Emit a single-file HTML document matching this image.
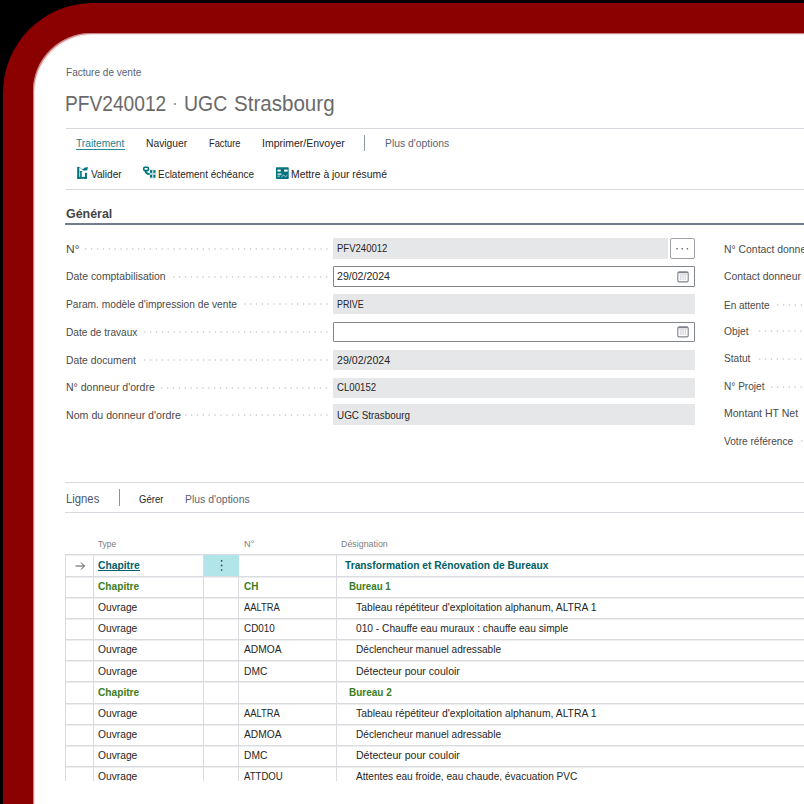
<!DOCTYPE html>
<html><head><meta charset="utf-8"><style>
html,body{margin:0;padding:0;}
body{width:804px;height:804px;overflow:hidden;background:#000;position:relative;font-family:"Liberation Sans",sans-serif;}
.t{position:absolute;white-space:nowrap;transform-origin:0 0;}
.r{position:absolute;}
#red{position:absolute;left:3px;top:3px;width:1000px;height:1000px;background:#8b0000;border-radius:90px;}
#white{position:absolute;left:33px;top:33px;width:1000px;height:1000px;background:#fff;border-radius:58px;overflow:hidden;box-shadow:inset 1px 1px 0 rgba(139,0,0,.42),inset 2px 2px 0 rgba(139,0,0,.1);}
#c{position:absolute;left:-33px;top:-33px;width:804px;height:804px;}
</style></head><body>
<div id="red"></div>
<div id="white"><div id="c">
<div class="t" style="left:65.60px;top:67.14px;font-size:10.7px;line-height:10.7px;color:#5a6473;font-weight:400;transform:scaleX(0.9390);">Facture de vente</div>
<div class="t" style="left:65.20px;top:93.22px;font-size:21.6px;line-height:21.6px;color:#6a6a6a;font-weight:400;transform:scaleX(0.8879);">PFV240012</div>
<div class="r" style="left:174.40px;top:102.50px;width:2.10px;height:2.10px;background:#7a7a7a;border-radius:50%"></div>
<div class="t" style="left:184.30px;top:93.22px;font-size:21.6px;line-height:21.6px;color:#6a6a6a;font-weight:400;transform:scaleX(0.9000);">UGC</div>
<div class="t" style="left:233.60px;top:93.22px;font-size:21.6px;line-height:21.6px;color:#6a6a6a;font-weight:400;transform:scaleX(0.9521);">Strasbourg</div>
<div class="r" style="left:66.00px;top:128.20px;width:800.00px;height:1.00px;background:#d5d9de"></div>
<div class="t" style="left:76.30px;top:137.59px;font-size:11px;line-height:11px;color:#1f7f8a;font-weight:400;transform:scaleX(0.9259);">Traitement</div>
<div class="r" style="left:76.30px;top:149.10px;width:48.30px;height:1.30px;background:#2a8893"></div>
<div class="t" style="left:145.80px;top:137.79px;font-size:11px;line-height:11px;color:#262626;font-weight:400;transform:scaleX(0.9336);">Naviguer</div>
<div class="t" style="left:208.50px;top:137.79px;font-size:11px;line-height:11px;color:#262626;font-weight:400;transform:scaleX(0.8447);">Facture</div>
<div class="t" style="left:261.80px;top:137.79px;font-size:11px;line-height:11px;color:#262626;font-weight:400;transform:scaleX(0.9528);">Imprimer/Envoyer</div>
<div class="r" style="left:364.00px;top:134.60px;width:1.20px;height:16.20px;background:#8f96a0"></div>
<div class="t" style="left:384.80px;top:137.79px;font-size:11px;line-height:11px;color:#5b6472;font-weight:400;transform:scaleX(0.9421);">Plus d'options</div>
<div class="t" style="left:91.00px;top:168.69px;font-size:11px;line-height:11px;color:#262626;font-weight:400;transform:scaleX(0.9185);">Valider</div>
<div class="t" style="left:158.00px;top:168.69px;font-size:11px;line-height:11px;color:#262626;font-weight:400;transform:scaleX(0.9075);">Eclatement échéance</div>
<div class="t" style="left:291.00px;top:168.69px;font-size:11px;line-height:11px;color:#262626;font-weight:400;transform:scaleX(0.9460);">Mettre à jour résumé</div>
<div class="r" style="left:66.00px;top:189.00px;width:800.00px;height:1.00px;background:#d5d9de"></div>
<svg class="r" style="left:77px;top:166px" width="12" height="14" viewBox="0 0 12 14">
<rect x="0.2" y="0.9" width="2.1" height="11.9" fill="#00727d"/>
<rect x="0.2" y="10.9" width="9.7" height="1.9" fill="#00727d"/>
<rect x="7.9" y="6.8" width="2" height="6" fill="#00727d"/>
<rect x="3" y="5.2" width="1.9" height="6.5" fill="#00727d" opacity="0.85"/>
<rect x="2.6" y="5" width="2.7" height="1" fill="#00727d" opacity="0.7"/>
<path d="M2 1.2 L6 3.8" stroke="#00727d" stroke-width="1" opacity="0.45"/>
<path d="M5 3.9 Q7 1.4 10.9 1.1 L10.3 4.2 Q7.6 4.9 5 3.9Z" fill="#00727d"/>
</svg>
<svg class="r" style="left:143px;top:166px" width="14" height="13" viewBox="0 0 14 13">
<rect x="0.8" y="1.3" width="4.6" height="3.3" rx="1" fill="none" stroke="#00727d" stroke-width="1.6"/>
<path d="M2.5 4.8 Q2.8 7.6 6.6 8.2" fill="none" stroke="#00727d" stroke-width="1.8"/>
<rect x="6.6" y="3.6" width="6.3" height="8.8" fill="#00727d" opacity="0.28"/>
<rect x="7" y="4.2" width="2" height="2.6" fill="#00727d"/>
<rect x="10.4" y="4.2" width="2" height="2.6" fill="#00727d"/>
<rect x="7" y="8.9" width="2" height="2.6" fill="#00727d"/>
<rect x="10.4" y="8.9" width="2" height="2.6" fill="#00727d"/>
</svg>
<svg class="r" style="left:275.6px;top:166.5px" width="13" height="13" viewBox="0 0 13 13">
<rect x="0" y="0.2" width="12.7" height="11.9" rx="0.8" fill="#00727d"/>
<rect x="1.5" y="2.6" width="3.2" height="2" fill="#fff"/>
<rect x="8" y="2.6" width="3.6" height="2" fill="#fff"/>
<rect x="1.5" y="6.3" width="4" height="1.9" fill="#fff" opacity="0.7"/>
<rect x="1.2" y="8.6" width="2.8" height="1.6" fill="#fff" opacity="0.45"/>
<path d="M5.5 10.5 L7.5 7.8 L9.5 9.8 L11.5 8" stroke="#fff" stroke-width="1" fill="none" opacity="0.6"/>
</svg>
<div class="t" style="left:65.60px;top:207.80px;font-size:12.4px;line-height:12.4px;color:#454545;font-weight:700;transform:scaleX(1.0026);">Général</div>
<div class="r" style="left:65.00px;top:223.30px;width:800.00px;height:1.40px;background:#737c8b"></div>
<div class="t" style="left:66.00px;top:243.56px;font-size:10.8px;line-height:10.8px;color:#4a4a4a;font-weight:400;transform:scaleX(1.1140);">N°</div>
<svg class="r" style="left:84.92px;top:247.80px" width="245.1" height="2"><circle cx="0.75" cy="1" r="0.75" fill="#bfc1c7"/><circle cx="6.63" cy="1" r="0.75" fill="#bfc1c7"/><circle cx="12.51" cy="1" r="0.75" fill="#bfc1c7"/><circle cx="18.39" cy="1" r="0.75" fill="#bfc1c7"/><circle cx="24.27" cy="1" r="0.75" fill="#bfc1c7"/><circle cx="30.15" cy="1" r="0.75" fill="#bfc1c7"/><circle cx="36.03" cy="1" r="0.75" fill="#bfc1c7"/><circle cx="41.91" cy="1" r="0.75" fill="#bfc1c7"/><circle cx="47.79" cy="1" r="0.75" fill="#bfc1c7"/><circle cx="53.67" cy="1" r="0.75" fill="#bfc1c7"/><circle cx="59.55" cy="1" r="0.75" fill="#bfc1c7"/><circle cx="65.43" cy="1" r="0.75" fill="#bfc1c7"/><circle cx="71.31" cy="1" r="0.75" fill="#bfc1c7"/><circle cx="77.19" cy="1" r="0.75" fill="#bfc1c7"/><circle cx="83.07" cy="1" r="0.75" fill="#bfc1c7"/><circle cx="88.95" cy="1" r="0.75" fill="#bfc1c7"/><circle cx="94.83" cy="1" r="0.75" fill="#bfc1c7"/><circle cx="100.71" cy="1" r="0.75" fill="#bfc1c7"/><circle cx="106.59" cy="1" r="0.75" fill="#bfc1c7"/><circle cx="112.47" cy="1" r="0.75" fill="#bfc1c7"/><circle cx="118.35" cy="1" r="0.75" fill="#bfc1c7"/><circle cx="124.23" cy="1" r="0.75" fill="#bfc1c7"/><circle cx="130.11" cy="1" r="0.75" fill="#bfc1c7"/><circle cx="135.99" cy="1" r="0.75" fill="#bfc1c7"/><circle cx="141.87" cy="1" r="0.75" fill="#bfc1c7"/><circle cx="147.75" cy="1" r="0.75" fill="#bfc1c7"/><circle cx="153.63" cy="1" r="0.75" fill="#bfc1c7"/><circle cx="159.51" cy="1" r="0.75" fill="#bfc1c7"/><circle cx="165.39" cy="1" r="0.75" fill="#bfc1c7"/><circle cx="171.27" cy="1" r="0.75" fill="#bfc1c7"/><circle cx="177.15" cy="1" r="0.75" fill="#bfc1c7"/><circle cx="183.03" cy="1" r="0.75" fill="#bfc1c7"/><circle cx="188.91" cy="1" r="0.75" fill="#bfc1c7"/><circle cx="194.79" cy="1" r="0.75" fill="#bfc1c7"/><circle cx="200.67" cy="1" r="0.75" fill="#bfc1c7"/><circle cx="206.55" cy="1" r="0.75" fill="#bfc1c7"/><circle cx="212.43" cy="1" r="0.75" fill="#bfc1c7"/><circle cx="218.31" cy="1" r="0.75" fill="#bfc1c7"/><circle cx="224.19" cy="1" r="0.75" fill="#bfc1c7"/><circle cx="230.07" cy="1" r="0.75" fill="#bfc1c7"/><circle cx="235.95" cy="1" r="0.75" fill="#bfc1c7"/><circle cx="241.83" cy="1" r="0.75" fill="#bfc1c7"/></svg>
<div class="r" style="left:333.00px;top:238.10px;width:335.00px;height:20.80px;background:#e6e7e9"></div>
<div class="t" style="left:336.60px;top:243.39px;font-size:11px;line-height:11px;color:#262626;font-weight:400;transform:scaleX(0.8675);">PFV240012</div>
<div class="t" style="left:66.00px;top:271.26px;font-size:10.8px;line-height:10.8px;color:#4a4a4a;font-weight:400;transform:scaleX(0.9646);">Date comptabilisation</div>
<svg class="r" style="left:173.12px;top:275.50px" width="156.9" height="2"><circle cx="0.75" cy="1" r="0.75" fill="#bfc1c7"/><circle cx="6.63" cy="1" r="0.75" fill="#bfc1c7"/><circle cx="12.51" cy="1" r="0.75" fill="#bfc1c7"/><circle cx="18.39" cy="1" r="0.75" fill="#bfc1c7"/><circle cx="24.27" cy="1" r="0.75" fill="#bfc1c7"/><circle cx="30.15" cy="1" r="0.75" fill="#bfc1c7"/><circle cx="36.03" cy="1" r="0.75" fill="#bfc1c7"/><circle cx="41.91" cy="1" r="0.75" fill="#bfc1c7"/><circle cx="47.79" cy="1" r="0.75" fill="#bfc1c7"/><circle cx="53.67" cy="1" r="0.75" fill="#bfc1c7"/><circle cx="59.55" cy="1" r="0.75" fill="#bfc1c7"/><circle cx="65.43" cy="1" r="0.75" fill="#bfc1c7"/><circle cx="71.31" cy="1" r="0.75" fill="#bfc1c7"/><circle cx="77.19" cy="1" r="0.75" fill="#bfc1c7"/><circle cx="83.07" cy="1" r="0.75" fill="#bfc1c7"/><circle cx="88.95" cy="1" r="0.75" fill="#bfc1c7"/><circle cx="94.83" cy="1" r="0.75" fill="#bfc1c7"/><circle cx="100.71" cy="1" r="0.75" fill="#bfc1c7"/><circle cx="106.59" cy="1" r="0.75" fill="#bfc1c7"/><circle cx="112.47" cy="1" r="0.75" fill="#bfc1c7"/><circle cx="118.35" cy="1" r="0.75" fill="#bfc1c7"/><circle cx="124.23" cy="1" r="0.75" fill="#bfc1c7"/><circle cx="130.11" cy="1" r="0.75" fill="#bfc1c7"/><circle cx="135.99" cy="1" r="0.75" fill="#bfc1c7"/><circle cx="141.87" cy="1" r="0.75" fill="#bfc1c7"/><circle cx="147.75" cy="1" r="0.75" fill="#bfc1c7"/><circle cx="153.63" cy="1" r="0.75" fill="#bfc1c7"/></svg>
<div class="r" style="left:333.00px;top:266.00px;width:361.70px;height:20.60px;border:1px solid #80858c;box-sizing:border-box;border-radius:1px;background:#fff"></div>
<svg class="r" style="left:676.6px;top:270.60px" width="12" height="12" viewBox="0 0 12 12">
<rect x="0.8" y="0.9" width="10.4" height="10" rx="1.3" fill="none" stroke="#80858d" stroke-width="1.1"/>
<path d="M1 1.6 H11" stroke="#80858d" stroke-width="1.2"/>
<path d="M3.3 3.5 V9 M5 3.5 V9 M6.8 3.5 V9 M8.6 3.5 V9" stroke="#c9ccd2" stroke-width="0.8"/>
<path d="M1.5 3.3 H10.5" stroke="#d5d7db" stroke-width="0.8"/>
</svg>
<div class="t" style="left:336.60px;top:271.09px;font-size:11px;line-height:11px;color:#262626;font-weight:400;transform:scaleX(0.9627);">29/02/2024</div>
<div class="t" style="left:66.00px;top:298.86px;font-size:10.8px;line-height:10.8px;color:#4a4a4a;font-weight:400;transform:scaleX(0.9450);">Param. modèle d'impression de vente</div>
<svg class="r" style="left:243.68px;top:303.10px" width="86.3" height="2"><circle cx="0.75" cy="1" r="0.75" fill="#bfc1c7"/><circle cx="6.63" cy="1" r="0.75" fill="#bfc1c7"/><circle cx="12.51" cy="1" r="0.75" fill="#bfc1c7"/><circle cx="18.39" cy="1" r="0.75" fill="#bfc1c7"/><circle cx="24.27" cy="1" r="0.75" fill="#bfc1c7"/><circle cx="30.15" cy="1" r="0.75" fill="#bfc1c7"/><circle cx="36.03" cy="1" r="0.75" fill="#bfc1c7"/><circle cx="41.91" cy="1" r="0.75" fill="#bfc1c7"/><circle cx="47.79" cy="1" r="0.75" fill="#bfc1c7"/><circle cx="53.67" cy="1" r="0.75" fill="#bfc1c7"/><circle cx="59.55" cy="1" r="0.75" fill="#bfc1c7"/><circle cx="65.43" cy="1" r="0.75" fill="#bfc1c7"/><circle cx="71.31" cy="1" r="0.75" fill="#bfc1c7"/><circle cx="77.19" cy="1" r="0.75" fill="#bfc1c7"/><circle cx="83.07" cy="1" r="0.75" fill="#bfc1c7"/></svg>
<div class="r" style="left:333.00px;top:293.80px;width:361.70px;height:20.60px;background:#e6e7e9"></div>
<div class="t" style="left:336.60px;top:298.69px;font-size:11px;line-height:11px;color:#262626;font-weight:400;transform:scaleX(0.8088);">PRIVE</div>
<div class="t" style="left:66.00px;top:326.96px;font-size:10.8px;line-height:10.8px;color:#4a4a4a;font-weight:400;transform:scaleX(0.9365);">Date de travaux</div>
<svg class="r" style="left:143.72px;top:331.20px" width="186.3" height="2"><circle cx="0.75" cy="1" r="0.75" fill="#bfc1c7"/><circle cx="6.63" cy="1" r="0.75" fill="#bfc1c7"/><circle cx="12.51" cy="1" r="0.75" fill="#bfc1c7"/><circle cx="18.39" cy="1" r="0.75" fill="#bfc1c7"/><circle cx="24.27" cy="1" r="0.75" fill="#bfc1c7"/><circle cx="30.15" cy="1" r="0.75" fill="#bfc1c7"/><circle cx="36.03" cy="1" r="0.75" fill="#bfc1c7"/><circle cx="41.91" cy="1" r="0.75" fill="#bfc1c7"/><circle cx="47.79" cy="1" r="0.75" fill="#bfc1c7"/><circle cx="53.67" cy="1" r="0.75" fill="#bfc1c7"/><circle cx="59.55" cy="1" r="0.75" fill="#bfc1c7"/><circle cx="65.43" cy="1" r="0.75" fill="#bfc1c7"/><circle cx="71.31" cy="1" r="0.75" fill="#bfc1c7"/><circle cx="77.19" cy="1" r="0.75" fill="#bfc1c7"/><circle cx="83.07" cy="1" r="0.75" fill="#bfc1c7"/><circle cx="88.95" cy="1" r="0.75" fill="#bfc1c7"/><circle cx="94.83" cy="1" r="0.75" fill="#bfc1c7"/><circle cx="100.71" cy="1" r="0.75" fill="#bfc1c7"/><circle cx="106.59" cy="1" r="0.75" fill="#bfc1c7"/><circle cx="112.47" cy="1" r="0.75" fill="#bfc1c7"/><circle cx="118.35" cy="1" r="0.75" fill="#bfc1c7"/><circle cx="124.23" cy="1" r="0.75" fill="#bfc1c7"/><circle cx="130.11" cy="1" r="0.75" fill="#bfc1c7"/><circle cx="135.99" cy="1" r="0.75" fill="#bfc1c7"/><circle cx="141.87" cy="1" r="0.75" fill="#bfc1c7"/><circle cx="147.75" cy="1" r="0.75" fill="#bfc1c7"/><circle cx="153.63" cy="1" r="0.75" fill="#bfc1c7"/><circle cx="159.51" cy="1" r="0.75" fill="#bfc1c7"/><circle cx="165.39" cy="1" r="0.75" fill="#bfc1c7"/><circle cx="171.27" cy="1" r="0.75" fill="#bfc1c7"/><circle cx="177.15" cy="1" r="0.75" fill="#bfc1c7"/><circle cx="183.03" cy="1" r="0.75" fill="#bfc1c7"/></svg>
<div class="r" style="left:333.00px;top:321.70px;width:361.70px;height:20.60px;border:1px solid #80858c;box-sizing:border-box;border-radius:1px;background:#fff"></div>
<svg class="r" style="left:676.6px;top:326.30px" width="12" height="12" viewBox="0 0 12 12">
<rect x="0.8" y="0.9" width="10.4" height="10" rx="1.3" fill="none" stroke="#80858d" stroke-width="1.1"/>
<path d="M1 1.6 H11" stroke="#80858d" stroke-width="1.2"/>
<path d="M3.3 3.5 V9 M5 3.5 V9 M6.8 3.5 V9 M8.6 3.5 V9" stroke="#c9ccd2" stroke-width="0.8"/>
<path d="M1.5 3.3 H10.5" stroke="#d5d7db" stroke-width="0.8"/>
</svg>
<div class="t" style="left:66.00px;top:354.86px;font-size:10.8px;line-height:10.8px;color:#4a4a4a;font-weight:400;transform:scaleX(0.9557);">Date document</div>
<svg class="r" style="left:143.72px;top:359.10px" width="186.3" height="2"><circle cx="0.75" cy="1" r="0.75" fill="#bfc1c7"/><circle cx="6.63" cy="1" r="0.75" fill="#bfc1c7"/><circle cx="12.51" cy="1" r="0.75" fill="#bfc1c7"/><circle cx="18.39" cy="1" r="0.75" fill="#bfc1c7"/><circle cx="24.27" cy="1" r="0.75" fill="#bfc1c7"/><circle cx="30.15" cy="1" r="0.75" fill="#bfc1c7"/><circle cx="36.03" cy="1" r="0.75" fill="#bfc1c7"/><circle cx="41.91" cy="1" r="0.75" fill="#bfc1c7"/><circle cx="47.79" cy="1" r="0.75" fill="#bfc1c7"/><circle cx="53.67" cy="1" r="0.75" fill="#bfc1c7"/><circle cx="59.55" cy="1" r="0.75" fill="#bfc1c7"/><circle cx="65.43" cy="1" r="0.75" fill="#bfc1c7"/><circle cx="71.31" cy="1" r="0.75" fill="#bfc1c7"/><circle cx="77.19" cy="1" r="0.75" fill="#bfc1c7"/><circle cx="83.07" cy="1" r="0.75" fill="#bfc1c7"/><circle cx="88.95" cy="1" r="0.75" fill="#bfc1c7"/><circle cx="94.83" cy="1" r="0.75" fill="#bfc1c7"/><circle cx="100.71" cy="1" r="0.75" fill="#bfc1c7"/><circle cx="106.59" cy="1" r="0.75" fill="#bfc1c7"/><circle cx="112.47" cy="1" r="0.75" fill="#bfc1c7"/><circle cx="118.35" cy="1" r="0.75" fill="#bfc1c7"/><circle cx="124.23" cy="1" r="0.75" fill="#bfc1c7"/><circle cx="130.11" cy="1" r="0.75" fill="#bfc1c7"/><circle cx="135.99" cy="1" r="0.75" fill="#bfc1c7"/><circle cx="141.87" cy="1" r="0.75" fill="#bfc1c7"/><circle cx="147.75" cy="1" r="0.75" fill="#bfc1c7"/><circle cx="153.63" cy="1" r="0.75" fill="#bfc1c7"/><circle cx="159.51" cy="1" r="0.75" fill="#bfc1c7"/><circle cx="165.39" cy="1" r="0.75" fill="#bfc1c7"/><circle cx="171.27" cy="1" r="0.75" fill="#bfc1c7"/><circle cx="177.15" cy="1" r="0.75" fill="#bfc1c7"/><circle cx="183.03" cy="1" r="0.75" fill="#bfc1c7"/></svg>
<div class="r" style="left:333.00px;top:349.80px;width:361.70px;height:20.60px;background:#e6e7e9"></div>
<div class="t" style="left:336.60px;top:354.69px;font-size:11px;line-height:11px;color:#262626;font-weight:400;transform:scaleX(0.9645);">29/02/2024</div>
<div class="t" style="left:66.00px;top:382.36px;font-size:10.8px;line-height:10.8px;color:#4a4a4a;font-weight:400;transform:scaleX(0.9754);">N° donneur d'ordre</div>
<svg class="r" style="left:161.36px;top:386.60px" width="168.6" height="2"><circle cx="0.75" cy="1" r="0.75" fill="#bfc1c7"/><circle cx="6.63" cy="1" r="0.75" fill="#bfc1c7"/><circle cx="12.51" cy="1" r="0.75" fill="#bfc1c7"/><circle cx="18.39" cy="1" r="0.75" fill="#bfc1c7"/><circle cx="24.27" cy="1" r="0.75" fill="#bfc1c7"/><circle cx="30.15" cy="1" r="0.75" fill="#bfc1c7"/><circle cx="36.03" cy="1" r="0.75" fill="#bfc1c7"/><circle cx="41.91" cy="1" r="0.75" fill="#bfc1c7"/><circle cx="47.79" cy="1" r="0.75" fill="#bfc1c7"/><circle cx="53.67" cy="1" r="0.75" fill="#bfc1c7"/><circle cx="59.55" cy="1" r="0.75" fill="#bfc1c7"/><circle cx="65.43" cy="1" r="0.75" fill="#bfc1c7"/><circle cx="71.31" cy="1" r="0.75" fill="#bfc1c7"/><circle cx="77.19" cy="1" r="0.75" fill="#bfc1c7"/><circle cx="83.07" cy="1" r="0.75" fill="#bfc1c7"/><circle cx="88.95" cy="1" r="0.75" fill="#bfc1c7"/><circle cx="94.83" cy="1" r="0.75" fill="#bfc1c7"/><circle cx="100.71" cy="1" r="0.75" fill="#bfc1c7"/><circle cx="106.59" cy="1" r="0.75" fill="#bfc1c7"/><circle cx="112.47" cy="1" r="0.75" fill="#bfc1c7"/><circle cx="118.35" cy="1" r="0.75" fill="#bfc1c7"/><circle cx="124.23" cy="1" r="0.75" fill="#bfc1c7"/><circle cx="130.11" cy="1" r="0.75" fill="#bfc1c7"/><circle cx="135.99" cy="1" r="0.75" fill="#bfc1c7"/><circle cx="141.87" cy="1" r="0.75" fill="#bfc1c7"/><circle cx="147.75" cy="1" r="0.75" fill="#bfc1c7"/><circle cx="153.63" cy="1" r="0.75" fill="#bfc1c7"/><circle cx="159.51" cy="1" r="0.75" fill="#bfc1c7"/><circle cx="165.39" cy="1" r="0.75" fill="#bfc1c7"/></svg>
<div class="r" style="left:333.00px;top:377.60px;width:361.70px;height:20.00px;background:#e6e7e9"></div>
<div class="t" style="left:336.60px;top:382.19px;font-size:11px;line-height:11px;color:#262626;font-weight:400;transform:scaleX(0.8757);">CL00152</div>
<div class="t" style="left:66.00px;top:410.06px;font-size:10.8px;line-height:10.8px;color:#4a4a4a;font-weight:400;transform:scaleX(0.9843);">Nom du donneur d'ordre</div>
<svg class="r" style="left:184.88px;top:414.30px" width="145.1" height="2"><circle cx="0.75" cy="1" r="0.75" fill="#bfc1c7"/><circle cx="6.63" cy="1" r="0.75" fill="#bfc1c7"/><circle cx="12.51" cy="1" r="0.75" fill="#bfc1c7"/><circle cx="18.39" cy="1" r="0.75" fill="#bfc1c7"/><circle cx="24.27" cy="1" r="0.75" fill="#bfc1c7"/><circle cx="30.15" cy="1" r="0.75" fill="#bfc1c7"/><circle cx="36.03" cy="1" r="0.75" fill="#bfc1c7"/><circle cx="41.91" cy="1" r="0.75" fill="#bfc1c7"/><circle cx="47.79" cy="1" r="0.75" fill="#bfc1c7"/><circle cx="53.67" cy="1" r="0.75" fill="#bfc1c7"/><circle cx="59.55" cy="1" r="0.75" fill="#bfc1c7"/><circle cx="65.43" cy="1" r="0.75" fill="#bfc1c7"/><circle cx="71.31" cy="1" r="0.75" fill="#bfc1c7"/><circle cx="77.19" cy="1" r="0.75" fill="#bfc1c7"/><circle cx="83.07" cy="1" r="0.75" fill="#bfc1c7"/><circle cx="88.95" cy="1" r="0.75" fill="#bfc1c7"/><circle cx="94.83" cy="1" r="0.75" fill="#bfc1c7"/><circle cx="100.71" cy="1" r="0.75" fill="#bfc1c7"/><circle cx="106.59" cy="1" r="0.75" fill="#bfc1c7"/><circle cx="112.47" cy="1" r="0.75" fill="#bfc1c7"/><circle cx="118.35" cy="1" r="0.75" fill="#bfc1c7"/><circle cx="124.23" cy="1" r="0.75" fill="#bfc1c7"/><circle cx="130.11" cy="1" r="0.75" fill="#bfc1c7"/><circle cx="135.99" cy="1" r="0.75" fill="#bfc1c7"/><circle cx="141.87" cy="1" r="0.75" fill="#bfc1c7"/></svg>
<div class="r" style="left:333.00px;top:404.20px;width:361.70px;height:20.60px;background:#e6e7e9"></div>
<div class="t" style="left:336.60px;top:409.89px;font-size:11px;line-height:11px;color:#262626;font-weight:400;transform:scaleX(0.8978);">UGC Strasbourg</div>
<div class="r" style="left:670.20px;top:238.30px;width:24.50px;height:20.60px;border:1px solid #9ca1a8;box-sizing:border-box;border-radius:2px;background:#fff"></div>
<svg class="r" style="left:670px;top:244px" width="25" height="10"><circle cx="7" cy="4.7" r="0.8" fill="#555"/><circle cx="12.2" cy="4.7" r="0.8" fill="#555"/><circle cx="17.4" cy="4.7" r="0.8" fill="#555"/></svg>
<div class="t" style="left:723.70px;top:244.06px;font-size:10.8px;line-height:10.8px;color:#4a4a4a;font-weight:400;transform:scaleX(0.9630);white-space:nowrap">N° Contact donneur d'ordre</div>
<div class="t" style="left:723.70px;top:271.26px;font-size:10.8px;line-height:10.8px;color:#4a4a4a;font-weight:400;transform:scaleX(0.9630);white-space:nowrap">Contact donneur d'ordre</div>
<div class="t" style="left:723.70px;top:299.56px;font-size:10.8px;line-height:10.8px;color:#4a4a4a;font-weight:400;transform:scaleX(0.9241);">En attente</div>
<svg class="r" style="left:777.10px;top:303.90px" width="28.9" height="2"><circle cx="0.75" cy="1" r="0.75" fill="#bfc1c7"/><circle cx="6.63" cy="1" r="0.75" fill="#bfc1c7"/><circle cx="12.51" cy="1" r="0.75" fill="#bfc1c7"/><circle cx="18.39" cy="1" r="0.75" fill="#bfc1c7"/><circle cx="24.27" cy="1" r="0.75" fill="#bfc1c7"/></svg>
<div class="t" style="left:723.70px;top:326.06px;font-size:10.8px;line-height:10.8px;color:#4a4a4a;font-weight:400;transform:scaleX(0.9491);">Objet</div>
<svg class="r" style="left:759.46px;top:330.40px" width="46.5" height="2"><circle cx="0.75" cy="1" r="0.75" fill="#bfc1c7"/><circle cx="6.63" cy="1" r="0.75" fill="#bfc1c7"/><circle cx="12.51" cy="1" r="0.75" fill="#bfc1c7"/><circle cx="18.39" cy="1" r="0.75" fill="#bfc1c7"/><circle cx="24.27" cy="1" r="0.75" fill="#bfc1c7"/><circle cx="30.15" cy="1" r="0.75" fill="#bfc1c7"/><circle cx="36.03" cy="1" r="0.75" fill="#bfc1c7"/><circle cx="41.91" cy="1" r="0.75" fill="#bfc1c7"/></svg>
<div class="t" style="left:723.70px;top:353.26px;font-size:10.8px;line-height:10.8px;color:#4a4a4a;font-weight:400;transform:scaleX(0.9356);">Statut</div>
<svg class="r" style="left:759.46px;top:357.60px" width="46.5" height="2"><circle cx="0.75" cy="1" r="0.75" fill="#bfc1c7"/><circle cx="6.63" cy="1" r="0.75" fill="#bfc1c7"/><circle cx="12.51" cy="1" r="0.75" fill="#bfc1c7"/><circle cx="18.39" cy="1" r="0.75" fill="#bfc1c7"/><circle cx="24.27" cy="1" r="0.75" fill="#bfc1c7"/><circle cx="30.15" cy="1" r="0.75" fill="#bfc1c7"/><circle cx="36.03" cy="1" r="0.75" fill="#bfc1c7"/><circle cx="41.91" cy="1" r="0.75" fill="#bfc1c7"/></svg>
<div class="t" style="left:723.70px;top:381.26px;font-size:10.8px;line-height:10.8px;color:#4a4a4a;font-weight:400;transform:scaleX(0.9346);">N° Projet</div>
<svg class="r" style="left:771.22px;top:385.60px" width="34.8" height="2"><circle cx="0.75" cy="1" r="0.75" fill="#bfc1c7"/><circle cx="6.63" cy="1" r="0.75" fill="#bfc1c7"/><circle cx="12.51" cy="1" r="0.75" fill="#bfc1c7"/><circle cx="18.39" cy="1" r="0.75" fill="#bfc1c7"/><circle cx="24.27" cy="1" r="0.75" fill="#bfc1c7"/><circle cx="30.15" cy="1" r="0.75" fill="#bfc1c7"/></svg>
<div class="t" style="left:723.70px;top:407.56px;font-size:10.8px;line-height:10.8px;color:#4a4a4a;font-weight:400;transform:scaleX(0.9746);">Montant HT Net</div>
<svg class="r" style="left:806.50px;top:411.90px" width="-0.5" height="2"><circle cx="0.75" cy="1" r="0.75" fill="#bfc1c7"/></svg>
<div class="t" style="left:723.70px;top:436.06px;font-size:10.8px;line-height:10.8px;color:#4a4a4a;font-weight:400;transform:scaleX(0.9371);">Votre référence</div>
<svg class="r" style="left:800.62px;top:440.40px" width="5.4" height="2"><circle cx="0.75" cy="1" r="0.75" fill="#bfc1c7"/></svg>
<div class="r" style="left:65.00px;top:482.00px;width:800.00px;height:1.00px;background:#d5d9de"></div>
<div class="t" style="left:66.20px;top:492.64px;font-size:12px;line-height:12px;color:#4c5666;font-weight:400;transform:scaleX(0.9417);">Lignes</div>
<div class="r" style="left:119.00px;top:489.00px;width:1.20px;height:17.00px;background:#8a929c"></div>
<div class="t" style="left:139.30px;top:493.66px;font-size:10.8px;line-height:10.8px;color:#262626;font-weight:400;transform:scaleX(0.8838);">Gérer</div>
<div class="t" style="left:184.70px;top:493.66px;font-size:10.8px;line-height:10.8px;color:#5b6472;font-weight:400;transform:scaleX(0.9671);">Plus d'options</div>
<div class="r" style="left:65.00px;top:512.20px;width:800.00px;height:1.00px;background:#d5d9de"></div>
<div class="t" style="left:98.00px;top:539.46px;font-size:9.5px;line-height:9.5px;color:#7d7d7d;font-weight:400;transform:scaleX(0.8740);">Type</div>
<div class="t" style="left:243.70px;top:539.46px;font-size:9.5px;line-height:9.5px;color:#7d7d7d;font-weight:400;transform:scaleX(0.9663);">N°</div>
<div class="t" style="left:340.70px;top:539.46px;font-size:9.5px;line-height:9.5px;color:#7d7d7d;font-weight:400;transform:scaleX(0.9328);">Désignation</div>
<div class="r" style="left:0;top:0;width:804px;height:780.6px;overflow:hidden">
<div class="r" style="left:65.00px;top:554.00px;width:740.00px;height:1.00px;background:#d9dbdf"></div>
<div class="r" style="left:65.00px;top:555.00px;width:740.00px;height:0.60px;background:#eceef0"></div>
<div class="r" style="left:65.00px;top:576.00px;width:740.00px;height:1.00px;background:#d9dbdf"></div>
<div class="r" style="left:65.00px;top:577.00px;width:740.00px;height:0.60px;background:#eceef0"></div>
<div class="r" style="left:65.00px;top:597.00px;width:740.00px;height:1.00px;background:#d9dbdf"></div>
<div class="r" style="left:65.00px;top:598.00px;width:740.00px;height:0.60px;background:#eceef0"></div>
<div class="r" style="left:65.00px;top:618.00px;width:740.00px;height:1.00px;background:#d9dbdf"></div>
<div class="r" style="left:65.00px;top:619.00px;width:740.00px;height:0.60px;background:#eceef0"></div>
<div class="r" style="left:65.00px;top:639.00px;width:740.00px;height:1.00px;background:#d9dbdf"></div>
<div class="r" style="left:65.00px;top:640.00px;width:740.00px;height:0.60px;background:#eceef0"></div>
<div class="r" style="left:65.00px;top:660.00px;width:740.00px;height:1.00px;background:#d9dbdf"></div>
<div class="r" style="left:65.00px;top:661.00px;width:740.00px;height:0.60px;background:#eceef0"></div>
<div class="r" style="left:65.00px;top:681.00px;width:740.00px;height:1.00px;background:#d9dbdf"></div>
<div class="r" style="left:65.00px;top:682.00px;width:740.00px;height:0.60px;background:#eceef0"></div>
<div class="r" style="left:65.00px;top:703.00px;width:740.00px;height:1.00px;background:#d9dbdf"></div>
<div class="r" style="left:65.00px;top:704.00px;width:740.00px;height:0.60px;background:#eceef0"></div>
<div class="r" style="left:65.00px;top:724.00px;width:740.00px;height:1.00px;background:#d9dbdf"></div>
<div class="r" style="left:65.00px;top:725.00px;width:740.00px;height:0.60px;background:#eceef0"></div>
<div class="r" style="left:65.00px;top:745.00px;width:740.00px;height:1.00px;background:#d9dbdf"></div>
<div class="r" style="left:65.00px;top:746.00px;width:740.00px;height:0.60px;background:#eceef0"></div>
<div class="r" style="left:65.00px;top:766.00px;width:740.00px;height:1.00px;background:#d9dbdf"></div>
<div class="r" style="left:65.00px;top:767.00px;width:740.00px;height:0.60px;background:#eceef0"></div>
<div class="r" style="left:65.00px;top:787.00px;width:740.00px;height:1.00px;background:#d9dbdf"></div>
<div class="r" style="left:65.00px;top:788.00px;width:740.00px;height:0.60px;background:#eceef0"></div>
<div class="r" style="left:65.00px;top:555.00px;width:1.00px;height:226.00px;background:#d9dbdf"></div>
<div class="r" style="left:93.00px;top:555.00px;width:1.00px;height:226.00px;background:#d9dbdf"></div>
<div class="r" style="left:203.00px;top:555.00px;width:1.00px;height:226.00px;background:#d9dbdf"></div>
<div class="r" style="left:238.00px;top:555.00px;width:1.00px;height:226.00px;background:#d9dbdf"></div>
<div class="r" style="left:336.00px;top:555.00px;width:1.00px;height:226.00px;background:#d9dbdf"></div>
</div>
<div class="r" style="left:0;top:0;width:804px;height:780.6px;overflow:hidden">
<div class="t" style="left:98.30px;top:559.76px;font-size:10.8px;line-height:10.8px;color:#00616b;font-weight:700;transform:scaleX(0.9542);">Chapitre</div>
<div class="r" style="left:98.30px;top:569.60px;width:41.80px;height:1.10px;background:#00616b"></div>
<div class="t" style="left:344.90px;top:559.76px;font-size:10.8px;line-height:10.8px;color:#005e66;font-weight:700;transform:scaleX(0.9472);">Transformation et Rénovation de Bureaux</div>
<div class="t" style="left:98.30px;top:580.92px;font-size:10.8px;line-height:10.8px;color:#3b7d23;font-weight:700;transform:scaleX(0.9405);">Chapitre</div>
<div class="t" style="left:244.00px;top:580.92px;font-size:10.8px;line-height:10.8px;color:#3b7d23;font-weight:700;transform:scaleX(0.9231);">CH</div>
<div class="t" style="left:348.90px;top:580.92px;font-size:10.8px;line-height:10.8px;color:#3b7d23;font-weight:700;transform:scaleX(0.9044);">Bureau 1</div>
<div class="t" style="left:98.30px;top:602.08px;font-size:10.8px;line-height:10.8px;color:#262626;font-weight:400;transform:scaleX(0.9487);">Ouvrage</div>
<div class="t" style="left:244.00px;top:602.08px;font-size:10.8px;line-height:10.8px;color:#262626;font-weight:400;transform:scaleX(0.8687);">AALTRA</div>
<div class="t" style="left:356.00px;top:602.08px;font-size:10.8px;line-height:10.8px;color:#262626;font-weight:400;transform:scaleX(0.9604);">Tableau répétiteur d'exploitation alphanum, ALTRA 1</div>
<div class="t" style="left:98.30px;top:623.24px;font-size:10.8px;line-height:10.8px;color:#262626;font-weight:400;transform:scaleX(0.9487);">Ouvrage</div>
<div class="t" style="left:244.00px;top:623.24px;font-size:10.8px;line-height:10.8px;color:#262626;font-weight:400;transform:scaleX(0.9162);">CD010</div>
<div class="t" style="left:356.00px;top:623.24px;font-size:10.8px;line-height:10.8px;color:#262626;font-weight:400;transform:scaleX(0.9446);">010 - Chauffe eau muraux : chauffe eau simple</div>
<div class="t" style="left:98.30px;top:644.40px;font-size:10.8px;line-height:10.8px;color:#262626;font-weight:400;transform:scaleX(0.9487);">Ouvrage</div>
<div class="t" style="left:244.00px;top:644.40px;font-size:10.8px;line-height:10.8px;color:#262626;font-weight:400;transform:scaleX(0.9469);">ADMOA</div>
<div class="t" style="left:356.00px;top:644.40px;font-size:10.8px;line-height:10.8px;color:#262626;font-weight:400;transform:scaleX(0.9368);">Déclencheur manuel adressable</div>
<div class="t" style="left:98.30px;top:665.56px;font-size:10.8px;line-height:10.8px;color:#262626;font-weight:400;transform:scaleX(0.9487);">Ouvrage</div>
<div class="t" style="left:244.00px;top:665.56px;font-size:10.8px;line-height:10.8px;color:#262626;font-weight:400;transform:scaleX(0.9473);">DMC</div>
<div class="t" style="left:356.00px;top:665.56px;font-size:10.8px;line-height:10.8px;color:#262626;font-weight:400;transform:scaleX(0.9778);">Détecteur pour couloir</div>
<div class="t" style="left:98.30px;top:686.72px;font-size:10.8px;line-height:10.8px;color:#3b7d23;font-weight:700;transform:scaleX(0.9405);">Chapitre</div>
<div class="t" style="left:348.90px;top:686.72px;font-size:10.8px;line-height:10.8px;color:#3b7d23;font-weight:700;transform:scaleX(0.9261);">Bureau 2</div>
<div class="t" style="left:98.30px;top:707.88px;font-size:10.8px;line-height:10.8px;color:#262626;font-weight:400;transform:scaleX(0.9487);">Ouvrage</div>
<div class="t" style="left:244.00px;top:707.88px;font-size:10.8px;line-height:10.8px;color:#262626;font-weight:400;transform:scaleX(0.8687);">AALTRA</div>
<div class="t" style="left:356.00px;top:707.88px;font-size:10.8px;line-height:10.8px;color:#262626;font-weight:400;transform:scaleX(0.9604);">Tableau répétiteur d'exploitation alphanum, ALTRA 1</div>
<div class="t" style="left:98.30px;top:729.04px;font-size:10.8px;line-height:10.8px;color:#262626;font-weight:400;transform:scaleX(0.9487);">Ouvrage</div>
<div class="t" style="left:244.00px;top:729.04px;font-size:10.8px;line-height:10.8px;color:#262626;font-weight:400;transform:scaleX(0.9469);">ADMOA</div>
<div class="t" style="left:356.00px;top:729.04px;font-size:10.8px;line-height:10.8px;color:#262626;font-weight:400;transform:scaleX(0.9368);">Déclencheur manuel adressable</div>
<div class="t" style="left:98.30px;top:750.20px;font-size:10.8px;line-height:10.8px;color:#262626;font-weight:400;transform:scaleX(0.9487);">Ouvrage</div>
<div class="t" style="left:244.00px;top:750.20px;font-size:10.8px;line-height:10.8px;color:#262626;font-weight:400;transform:scaleX(0.9473);">DMC</div>
<div class="t" style="left:356.00px;top:750.20px;font-size:10.8px;line-height:10.8px;color:#262626;font-weight:400;transform:scaleX(0.9778);">Détecteur pour couloir</div>
<div class="t" style="left:98.30px;top:771.36px;font-size:10.8px;line-height:10.8px;color:#262626;font-weight:400;transform:scaleX(0.9487);">Ouvrage</div>
<div class="t" style="left:244.00px;top:771.36px;font-size:10.8px;line-height:10.8px;color:#262626;font-weight:400;transform:scaleX(0.8900);">ATTDOU</div>
<div class="t" style="left:356.00px;top:771.36px;font-size:10.8px;line-height:10.8px;color:#262626;font-weight:400;transform:scaleX(0.9359);">Attentes eau froide, eau chaude, évacuation PVC</div>
</div>
<svg class="r" style="left:74.5px;top:561px" width="11" height="10" viewBox="0 0 11 10">
<path d="M0.5 5 H9.5 M6 1.5 L9.5 5 L6 8.5" fill="none" stroke="#555" stroke-width="1"/>
</svg>
<div class="r" style="left:203.50px;top:555.00px;width:35.10px;height:20.60px;background:#b1e5ea"></div>
<svg class="r" style="left:216px;top:556px" width="12" height="20"><circle cx="5.6" cy="4.8" r="0.85" fill="#3a3f4a"/><circle cx="5.6" cy="9.4" r="0.85" fill="#3a3f4a"/><circle cx="5.6" cy="14" r="0.85" fill="#3a3f4a"/></svg>
</div></div>
</body></html>
